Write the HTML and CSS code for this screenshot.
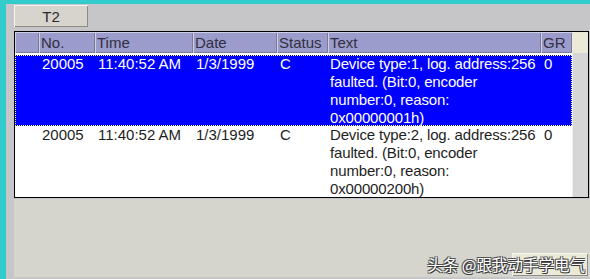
FILE: index.html
```html
<!DOCTYPE html>
<html lang="en">
<head>
  <meta charset="UTF-8" />
  <title>Alarm view</title>
  <link rel="stylesheet" href="styles.css">
</head>
<body>

<div class="panel">
  <div class="toolbar">
    <button class="btn">T2</button>
  </div>

  <div class="grid">
    <div class="head">
      <div class="hcell"></div>
      <div class="hcell">No.</div>
      <div class="hcell">Time</div>
      <div class="hcell">Date</div>
      <div class="hcell">Status</div>
      <div class="hcell">Text</div>
      <div class="hcell">GR</div>
      <div class="corner"></div>
    </div>
    <div class="body">
      <div class="rows">
        <div class="row selected">
          <div class="cell"></div>
          <div class="cell">20005</div>
          <div class="cell">11:40:52 AM</div>
          <div class="cell">1/3/1999</div>
          <div class="cell">C</div>
          <div class="cell text">Device type:1, log. address:256<br>faulted. (Bit:0, encoder<br>number:0, reason:<br>0x00000001h)</div>
          <div class="cell">0</div>
        </div>
        <div class="row">
          <div class="cell"></div>
          <div class="cell">20005</div>
          <div class="cell">11:40:52 AM</div>
          <div class="cell">1/3/1999</div>
          <div class="cell">C</div>
          <div class="cell text">Device type:2, log. address:256<br>faulted. (Bit:0, encoder<br>number:0, reason:<br>0x00000200h)</div>
          <div class="cell">0</div>
        </div>
      </div>
      <div class="scroll"></div>
    </div>
  </div>

  <div class="below">
    <button class="btn small"></button>
    <div class="watermark">头条 @跟我动手学电气</div>
  </div>
</div>

</body>
</html>
```

FILE: styles.css
```css
html, body {
  margin: 0;
  height: 100%;
}
body {
  background: #33cccc;
  padding: 4px 0 0 6px;
  box-sizing: border-box;
  font-family: "Liberation Sans", Arial, sans-serif;
  font-size: 15px;
  overflow: hidden;
}
.panel {
  background: #c6c6c8;
  height: 275px;
  padding: 0 0 2px 8px;
  box-sizing: border-box;
  display: flex;
  flex-direction: column;
}
.toolbar {
  height: 27px;
  padding-top: 1px;
  box-sizing: border-box;
}
.btn {
  width: 74px;
  height: 22px;
  padding: 0;
  margin: 0;
  background: #d6d4cc;
  border: none;
  box-shadow: inset 1px 1px #f4f4f0, inset -1px -1px #8c8c88;
  font-family: inherit;
  font-size: 15px;
  color: #2a2a2a;
}

.grid {
  width: 575px;
  height: 167px;
  box-sizing: border-box;
  border: 1px solid #000;
  background: #fff;
}
.head {
  display: grid;
  grid-template-columns: 24px 56px 98px 84px 51px 213px 31px 16px;
  height: 21px;
}
.hcell {
  background: #9c9ccc;
  color: #303040;
  line-height: 21px;
  padding-left: 2px;
  box-shadow: inset 1px 1px #cfcfe6, inset -1px -1px #7a7a99;
  white-space: nowrap;
  overflow: hidden;
}
.corner {
  background: #ece9d8;
}
.body {
  display: flex;
  height: 144px;
}
.rows {
  flex: 1;
  padding-top: 2px;
}
.row {
  display: grid;
  grid-template-columns: 24px 56px 98px 84px 51px 213px 31px;
  height: 71px;
  color: #1e1e1e;
  line-height: 18px;
}
.row.selected {
  background: #0000ff;
  color: #fff;
  outline: 1px dotted #ffff80;
  outline-offset: -1px;
}
.cell {
  padding-left: 3px;
  white-space: nowrap;
}
.cell.text {
  padding-left: 2px;
  letter-spacing: -0.15px;
}
.scroll {
  width: 16px;
  background: #d6d6d6;
  box-shadow: inset 1px 0 #ececec;
}

.below {
  flex: 1;
  position: relative;
  background: #d5d5cd;
  margin-top: 1px;
  display: flex;
  justify-content: flex-end;
  align-items: flex-end;
  padding: 0 2px 1px 0;
}
.btn.small {
  width: 76px;
  height: 23px;
  background: #ece9d8;
}
.watermark {
  position: absolute;
  right: 5px;
  bottom: 4px;
  font-family: "Noto Sans CJK SC", sans-serif;
  font-size: 15.5px;
  line-height: 18px;
  color: #fff;
  text-shadow: 1px 1px 0 #333, -1px -1px 0 #555, 1px -1px 0 #555, -1px 1px 0 #555;
  white-space: nowrap;
}
```
